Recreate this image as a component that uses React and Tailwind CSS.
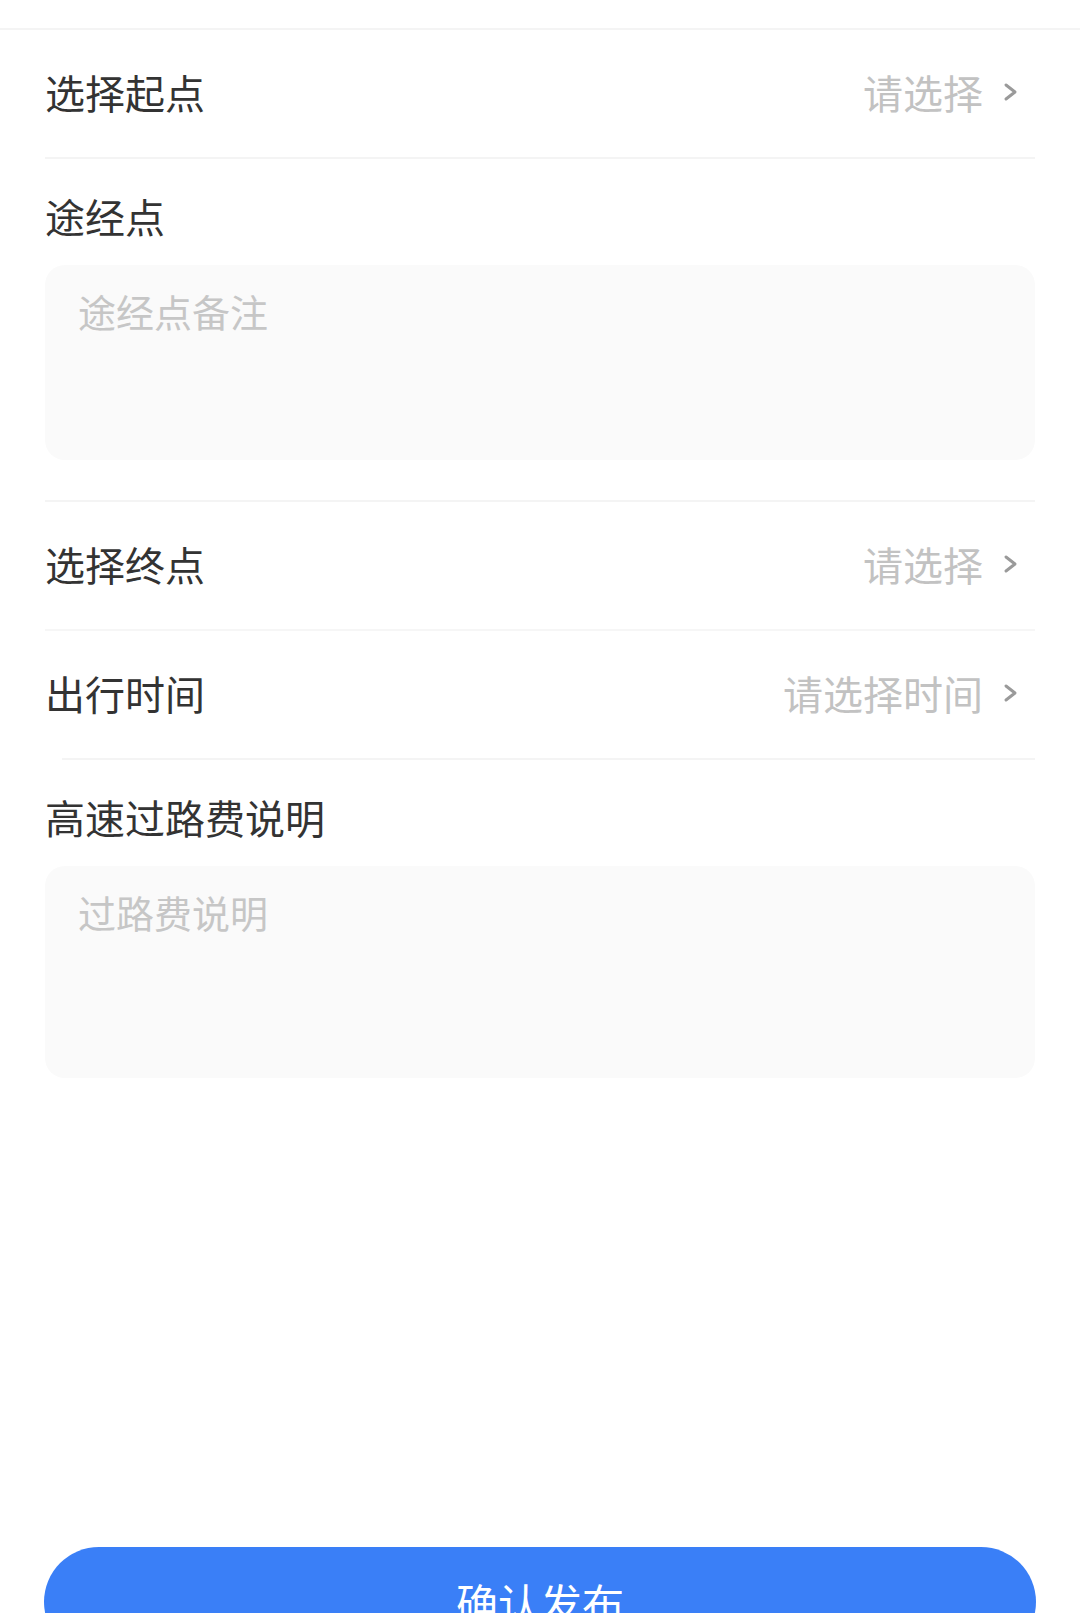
import { useState } from 'react'

function Chevron() {
  return (
    <svg viewBox="0 0 16 20" className="h-[20px] w-[16px]" fill="none">
      <path d="M4 3l9 7-9 7" stroke="#9a9a9a" strokeWidth="3" strokeLinecap="round" strokeLinejoin="round" />
    </svg>
  )
}

function PickRow({ label, hint }) {
  return (
    <div className="flex h-[127px] items-center justify-between pr-[17px] pb-[3px]">
      <span className="text-[40px] leading-[40px] text-[#333333]">{label}</span>
      <span className="flex items-center gap-[19px]">
        <span className="text-[40px] leading-[40px] text-[#c2c2c2]">{hint}</span>
        <Chevron />
      </span>
    </div>
  )
}

function Note({ label, hint, height, value, onChange }) {
  return (
    <div className="pt-[37px]">
      <div className="text-[40px] leading-[40px] text-[#333333]">{label}</div>
      <textarea
        value={value}
        onChange={(e) => onChange(e.target.value)}
        placeholder={hint}
        className={`mt-[29px] block w-full resize-none rounded-[20px] bg-[#fafafa] px-[33px] pt-[27px] text-[38px] leading-[38px] text-[#333333] outline-none placeholder:text-[#c6c6c6] ${height}`}
      />
    </div>
  )
}

export default function App() {
  const [via, setVia] = useState('')
  const [toll, setToll] = useState('')

  return (
    <div
      className="min-h-[1613px] w-[1080px] overflow-hidden bg-white"
      style={{ fontFamily: '"Noto Sans CJK SC", "Noto Sans", sans-serif' }}
    >
      <div className="h-[28px]" />
      <div className="h-[2px] bg-[#f4f4f4]" />

      <div className="mx-[45px]">
        <PickRow label="选择起点" hint="请选择" />
        <div className="h-[2px] bg-[#f4f4f4]" />

        <div className="pb-[40px]">
          <Note label="途经点" hint="途经点备注" height="h-[195px]" value={via} onChange={setVia} />
        </div>
        <div className="h-[2px] bg-[#f4f4f4]" />

        <PickRow label="选择终点" hint="请选择" />
        <div className="h-[2px] bg-[#f6f6f6]" />

        <PickRow label="出行时间" hint="请选择时间" />
        <div className="ml-[17px] h-[2px] bg-[#f4f4f4]" />

        <Note label="高速过路费说明" hint="过路费说明" height="h-[212px]" value={toll} onChange={setToll} />
      </div>

      <div className="mx-[44px] mt-[469px]">
        <button className="flex h-[110px] w-full items-center justify-center rounded-full bg-[#3a7ff7] text-[42px] leading-[42px] text-white">
          确认发布
        </button>
      </div>
    </div>
  )
}
